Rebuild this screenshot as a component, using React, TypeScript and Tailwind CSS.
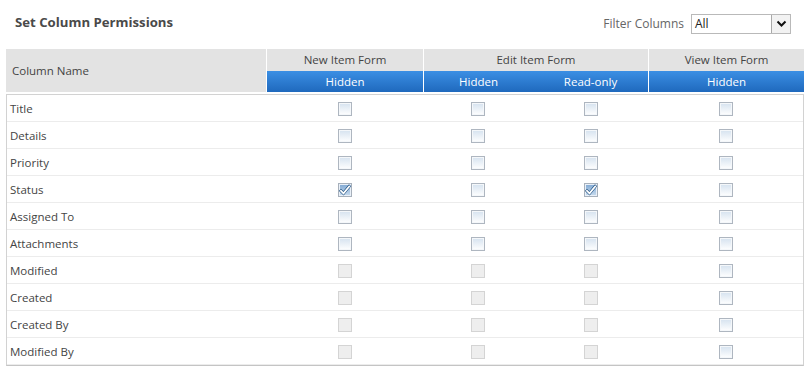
import React from 'react';

type Row = { name: string; checks: boolean[]; locked: boolean };

const rows: Row[] = [
  { name: 'Title', checks: [false, false, false, false], locked: false },
  { name: 'Details', checks: [false, false, false, false], locked: false },
  { name: 'Priority', checks: [false, false, false, false], locked: false },
  { name: 'Status', checks: [true, false, true, false], locked: false },
  { name: 'Assigned To', checks: [false, false, false, false], locked: false },
  { name: 'Attachments', checks: [false, false, false, false], locked: false },
  { name: 'Modified', checks: [false, false, false, false], locked: true },
  { name: 'Created', checks: [false, false, false, false], locked: true },
  { name: 'Created By', checks: [false, false, false, false], locked: true },
  { name: 'Modified By', checks: [false, false, false, false], locked: true },
];

const head = 'grid grid-cols-[260px_157px_110px_115px_1fr]';
const body = 'grid grid-cols-[259px_157px_110px_115px_1fr]';

const Box: React.FC<{ checked?: boolean; disabled?: boolean }> = ({ checked, disabled }) => {
  if (disabled) {
    return <span className="block w-[14px] h-[14px] border border-[#d4d4d4] bg-[#eeeeee]" />;
  }
  if (checked) {
    return (
      <span className="relative block w-[14px] h-[14px] border border-[#a7b0bb] bg-gradient-to-b from-[#7fa8d3] to-[#c9dcee] shadow-[inset_0_0_0_1px_#e9f0f8]">
        <svg width="12" height="12" viewBox="0 0 12 12" className="absolute left-0 top-0">
          <path d="M2 6.8 L4.5 9.3 L10.2 2.4" fill="none" stroke="#1d4f80" strokeWidth="3" strokeLinecap="square" />
          <path d="M2 6.8 L4.5 9.3 L10.2 2.4" fill="none" stroke="#ffffff" strokeWidth="1.8" strokeLinecap="square" />
        </svg>
      </span>
    );
  }
  return (
    <span className="block w-[14px] h-[14px] border border-[#aeb6c0] bg-gradient-to-b from-[#d5e2ef] to-white shadow-[inset_0_0_0_1px_#f4f7fa]" />
  );
};

export default function App() {
  return (
    <div className="w-[806px] h-[367px] bg-white text-[11.5px] text-[#444] overflow-hidden" style={{ fontFamily: '"Segoe UI", "Open Sans", sans-serif' }}>
      <div className="flex items-center justify-between h-[49px] pl-[15px] pr-[15px] pb-[4px]">
        <span className="text-[13.2px] font-bold text-[#4a4a4a]">Set Column Permissions</span>
        <div className="flex items-center gap-[7px] pt-[3px]">
          <span className="text-[12px] text-[#666]">Filter Columns</span>
          <div className="flex items-center w-[100px] h-[20px] border border-[#b9b9b9] bg-white">
            <span className="flex-1 pl-[3px] text-[12px] text-[#222] leading-none">All</span>
            <span className="flex items-center justify-center w-[19px] h-[18px] border-l border-[#a9a9a9] bg-[#f2f2f2]">
              <svg width="11" height="8" viewBox="0 0 11 8">
                <path d="M1.5 1.5 L5.5 5.5 L9.5 1.5" fill="none" stroke="#111" strokeWidth="2" />
              </svg>
            </span>
          </div>
        </div>
      </div>

      <div className="ml-[6px] w-[798px]">
        <div className={`${head} h-[43px]`}>
          <div className="row-span-2 flex items-center pl-[6px] bg-[#e3e3e3]">Column Name</div>
          <div className="flex items-center justify-center bg-[#e3e3e3] border-l border-white h-[22px]">New Item Form</div>
          <div className="col-span-2 flex items-center justify-center bg-[#e3e3e3] border-l border-white h-[22px]">Edit Item Form</div>
          <div className="flex items-center justify-center bg-[#e3e3e3] border-l border-white h-[22px]">View Item Form</div>
          <div className="flex items-center justify-center h-[21px] bg-gradient-to-b from-[#3b8fe4] to-[#1f69bd] text-white border-l border-white">Hidden</div>
          <div className="flex items-center justify-center h-[21px] bg-gradient-to-b from-[#3b8fe4] to-[#1f69bd] text-white border-l border-white">Hidden</div>
          <div className="flex items-center justify-center h-[21px] bg-gradient-to-b from-[#3b8fe4] to-[#1f69bd] text-white">Read-only</div>
          <div className="flex items-center justify-center h-[21px] bg-gradient-to-b from-[#3b8fe4] to-[#1f69bd] text-white border-l border-white">Hidden</div>
        </div>

        <div className="mt-[2px] border border-[#d2d2d2] border-b-[#c4c4c4]">
          {rows.map(r => (
            <div key={r.name} className={`${body} h-[27px] border-b border-[#ececec] pt-[2px]`}>
              <div className="flex items-center pl-[3px] text-[#444]">{r.name}</div>
              {r.checks.map((c, i) => (
                <div key={i} className="flex items-center justify-center">
                  <Box checked={c} disabled={r.locked && i < 3} />
                </div>
              ))}
            </div>
          ))}
        </div>
      </div>
    </div>
  );
}
